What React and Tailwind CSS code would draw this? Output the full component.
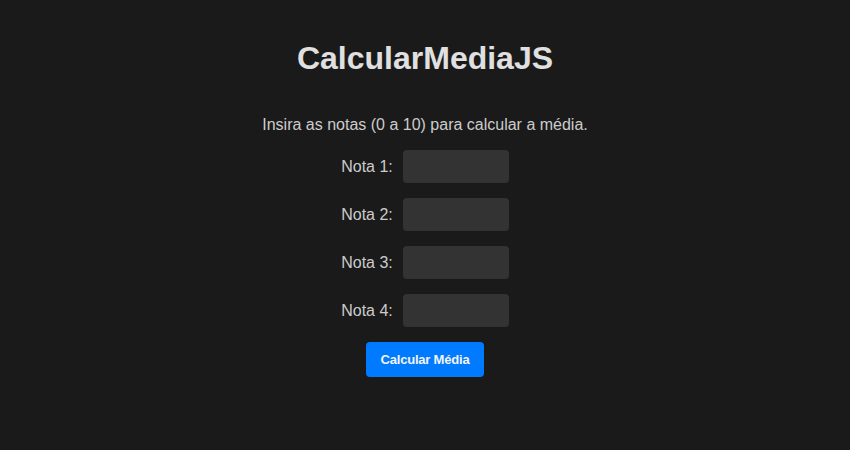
import React from 'react';

const App = () => {
  const notas = [1, 2, 3, 4];

  return (
    <div className="min-h-[450px] w-full bg-[#1a1a1a] text-[#e0e0e0] font-['Liberation_Sans',Arial,sans-serif]">
      <div className="flex flex-col items-center pt-[40px]">
        <h1 className="text-[32px] font-bold leading-[37px] text-[#e0e0e0]">CalcularMediaJS</h1>
        <p className="mt-[39px] text-base leading-[18px] text-[#cccccc]">
          Insira as notas (0 a 10) para calcular a média.
        </p>
        <div className="mt-[16px] flex flex-col items-center gap-[15px]">
          {notas.map((n) => (
            <div key={n} className="flex items-center">
              <label className="mr-[10px] text-base text-[#cccccc]">Nota {n}:</label>
              <input
                type="number"
                className="h-[33px] w-[106px] rounded bg-[#333333] px-2 text-[#e0e0e0] outline-none"
              />
            </div>
          ))}
          <button className="h-[35px] w-[118px] rounded bg-[#007bff] text-[13px] font-bold tracking-[-0.2px] text-[#f4f4f4]">
            Calcular Média
          </button>
        </div>
      </div>
    </div>
  );
};

export default App;
